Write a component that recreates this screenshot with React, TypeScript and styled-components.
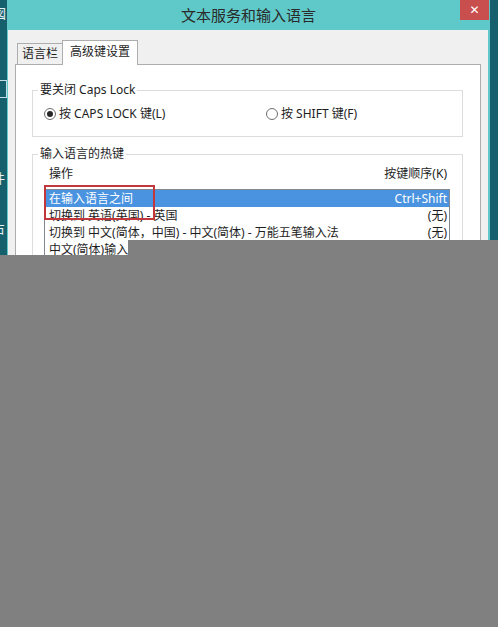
import styled, { createGlobalStyle } from 'styled-components';

const GlobalStyle = createGlobalStyle`
  html, body {
    margin: 0;
    padding: 0;
    background: #808080;
  }
  body {
    font-family: "Noto Sans", "Noto Sans CJK SC", sans-serif;
    color: #1e1e1e;
  }
`;

const Screen = styled.div`
  position: relative;
  width: 498px;
  height: 627px;
  overflow: hidden;
  background: #808080;
  display: flex;
  flex-direction: column;
`;

const Desktop = styled.div`
  display: flex;
  height: 255px;
  flex-shrink: 0;
  overflow: hidden;
`;

const DesktopEdge = styled.div<{ $w: number }>`
  position: relative;
  width: ${(p) => p.$w}px;
  flex-shrink: 0;
  background: #16606e;
  overflow: hidden;
`;

const EdgeGlyph = styled.span<{ $top: number; $left: number }>`
  position: absolute;
  top: ${(p) => p.$top}px;
  left: ${(p) => p.$left}px;
  font-family: "Noto Sans CJK SC", sans-serif;
  font-size: 13px;
  line-height: 14px;
  color: #e8f2f4;
`;

const EdgeBox = styled.div`
  position: absolute;
  top: 80px;
  left: -8px;
  width: 13px;
  height: 16px;
  border: 1px solid #c6dde4;
`;

const Window = styled.div`
  flex: 1;
  display: flex;
  flex-direction: column;
  min-width: 0;
`;

const TitleBar = styled.div`
  height: 30px;
  flex-shrink: 0;
  background: #5ec9c8;
  display: grid;
  grid-template-columns: 1fr auto 1fr;
`;

const Title = styled.div`
  grid-column: 2;
  font-family: "Noto Sans CJK SC", sans-serif;
  font-size: 15px;
  line-height: 30px;
  color: #2a2a2a;
  white-space: nowrap;
`;

const CloseButton = styled.div`
  grid-column: 3;
  justify-self: end;
  align-self: start;
  margin-right: 1px;
  width: 29px;
  height: 20px;
  background: #c94f4e;
  color: #fff;
  font-family: "DejaVu Sans", sans-serif;
  font-size: 12px;
  line-height: 20px;
  text-align: center;
`;

const Body = styled.div`
  flex: 1;
  display: flex;
  flex-direction: column;
  background: #f0f0f0;
  border-left: 1px solid #5ec9c8;
  border-right: 2px solid #5ec9c8;
  padding: 10px 7px 0 7px;
`;

const TabRow = styled.div`
  position: relative;
  z-index: 1;
  display: flex;
  align-items: flex-end;
  height: 25px;
  margin-bottom: -1px;
  padding-left: 2px;
`;

const Tab = styled.div<{ $active?: boolean }>`
  height: ${(p) => (p.$active ? 25 : 22)}px;
  box-sizing: border-box;
  padding: ${(p) => (p.$active ? '0 7px' : '0 4px')};
  margin-right: -1px;
  border: 1px solid #adadad;
  border-bottom: ${(p) => (p.$active ? 'none' : '1px solid #adadad')};
  background: ${(p) => (p.$active ? '#fff' : '#f0f0f0')};
  font-size: 12px;
  line-height: ${(p) => (p.$active ? 22 : 19)}px;
  white-space: nowrap;
`;

const Panel = styled.div`
  flex: 1;
  background: #fff;
  border: 1px solid #adadad;
  padding: 17px 17px 0 16px;
`;

const Group = styled.fieldset<{ $gap?: number }>`
  margin: ${(p) => p.$gap ?? 0}px 0 0 0;
  padding: 0;
  border: 1px solid #dcdcdc;
  min-width: 0;
`;

const GroupLabel = styled.legend`
  margin-left: 5px;
  padding: 0 2px;
  font-size: 12px;
  line-height: 16px;
`;

const RadioRow = styled.div`
  display: grid;
  grid-template-columns: 222px auto;
  padding: 8px 0 14px 11px;
`;

const RadioOption = styled.label`
  display: flex;
  align-items: center;
  gap: 3px;
  font-size: 12px;
  line-height: 16px;
  white-space: nowrap;
`;

const RadioCircle = styled.span<{ $checked?: boolean }>`
  width: 12px;
  height: 12px;
  box-sizing: border-box;
  border-radius: 50%;
  border: 1px solid #6f6f6f;
  background: #fff;
  display: flex;
  align-items: center;
  justify-content: center;
  &::after {
    content: '';
    width: 6px;
    height: 6px;
    border-radius: 50%;
    background: ${(p) => (p.$checked ? '#262626' : 'transparent')};
  }
`;

const HotkeyArea = styled.div`
  padding: 4px 12px 0 11px;
`;

const HeaderRow = styled.div`
  display: flex;
  justify-content: space-between;
  padding: 0 3px 0 5px;
  font-size: 12px;
  line-height: 16px;
`;

const KeyList = styled.div`
  margin-top: 7px;
  border: 1px solid #828790;
  background: #fff;
`;

const KeyRow = styled.div<{ $selected?: boolean }>`
  display: flex;
  justify-content: space-between;
  height: 17px;
  padding: 0 2px 0 4px;
  font-size: 12px;
  line-height: 17px;
  white-space: nowrap;
  background: ${(p) => (p.$selected ? '#4a93e0' : 'transparent')};
  color: ${(p) => (p.$selected ? '#fff' : '#1e1e1e')};
`;

const Highlight = styled.div`
  position: absolute;
  left: 44px;
  top: 185px;
  width: 111px;
  height: 35px;
  box-sizing: border-box;
  border: 2px solid #c2373b;
`;

const GrayPatch = styled.div`
  position: absolute;
  left: 128px;
  right: 0;
  top: 240px;
  height: 15px;
  background: #808080;
`;

const hotkeys = [
  { action: '在输入语言之间', keys: 'Ctrl+Shift', selected: true },
  { action: '切换到 英语(英国) - 英国', keys: '(无)' },
  { action: '切换到 中文(简体，中国) - 中文(简体) - 万能五笔输入法', keys: '(无)' },
  { action: '中文(简体)输入法 - 输入法/非输入法切换', keys: 'Ctrl+Space' },
];

export default function App() {
  return (
    <Screen>
      <GlobalStyle />
      <Desktop>
        <DesktopEdge $w={7}>
          <EdgeGlyph $top={6} $left={-7}>図</EdgeGlyph>
          <EdgeBox />
          <EdgeGlyph $top={171} $left={-8}>件</EdgeGlyph>
          <EdgeGlyph $top={221} $left={-8}>占</EdgeGlyph>
        </DesktopEdge>
        <Window>
          <TitleBar>
            <Title>文本服务和输入语言</Title>
            <CloseButton>✕</CloseButton>
          </TitleBar>
          <Body>
            <TabRow>
              <Tab>语言栏</Tab>
              <Tab $active>高级键设置</Tab>
            </TabRow>
            <Panel>
              <Group>
                <GroupLabel>要关闭 Caps Lock</GroupLabel>
                <RadioRow>
                  <RadioOption>
                    <RadioCircle $checked />
                    按 CAPS LOCK 键(L)
                  </RadioOption>
                  <RadioOption>
                    <RadioCircle />
                    按 SHIFT 键(F)
                  </RadioOption>
                </RadioRow>
              </Group>
              <Group $gap={9}>
                <GroupLabel>输入语言的热键</GroupLabel>
                <HotkeyArea>
                  <HeaderRow>
                    <span>操作</span>
                    <span>按键顺序(K)</span>
                  </HeaderRow>
                  <KeyList>
                    {hotkeys.map((h) => (
                      <KeyRow key={h.action} $selected={h.selected}>
                        <span>{h.action}</span>
                        <span>{h.keys}</span>
                      </KeyRow>
                    ))}
                  </KeyList>
                </HotkeyArea>
              </Group>
            </Panel>
          </Body>
        </Window>
        <DesktopEdge $w={8} />
      </Desktop>
      <Highlight />
      <GrayPatch />
    </Screen>
  );
}
